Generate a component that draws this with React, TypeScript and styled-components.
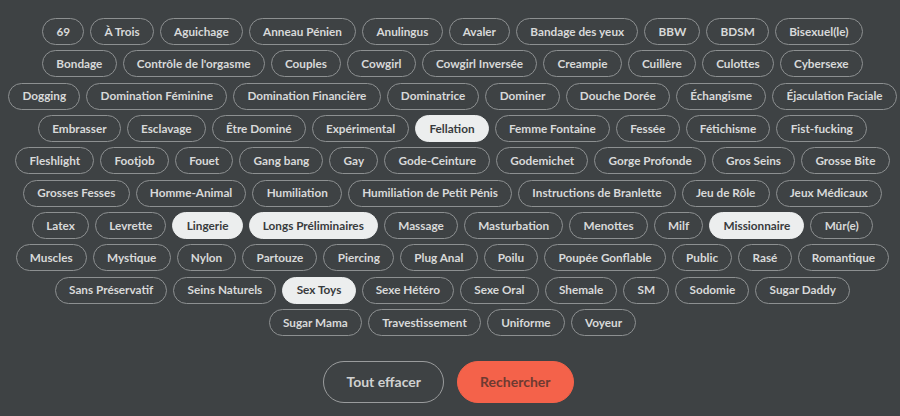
import React from "react";
import styled, { createGlobalStyle } from "styled-components";

const GlobalStyle = createGlobalStyle`
  html, body { margin: 0; padding: 0; background: #3e4244; }
  body { font-family: "Lato", "Liberation Sans", sans-serif; }
`;

const Page = styled.div`
  width: 900px;
  height: 416px;
  box-sizing: border-box;
  padding: 18px 5px 0 10px;
  display: flex;
  flex-direction: column;
  align-items: center;
  overflow: hidden;
`;

const TagCloud = styled.div`
  display: flex;
  flex-direction: column;
  gap: 5.33px;
  width: 100%;
`;

const TagRow = styled.div`
  display: flex;
  justify-content: center;
  gap: 6px;
`;

const Tag = styled.button<{ $active?: boolean }>`
  height: 27px;
  box-sizing: border-box;
  padding: 0 13.2px;
  border-radius: 14px;
  border: 1px solid ${(p) => (p.$active ? "#eceeee" : "#8d9091")};
  background: ${(p) => (p.$active ? "#eceeee" : "transparent")};
  color: ${(p) => (p.$active ? "#383b3d" : "#d8d9d9")};
  font-family: "Lato", "Liberation Sans", sans-serif;
  font-weight: 700;
  font-size: 11.75px;
  line-height: 1;
  white-space: nowrap;
  display: inline-flex;
  align-items: center;
  flex: none;
  cursor: pointer;
`;

const Actions = styled.div`
  display: flex;
  gap: 13px;
  margin-top: 25px;
  margin-right: 8px;
`;

const ActionButton = styled.button<{ $primary?: boolean }>`
  height: 42px;
  box-sizing: border-box;
  padding: 0 22px;
  border-radius: 21px;
  border: 1px solid ${(p) => (p.$primary ? "#f4624a" : "#9a9c9d")};
  background: ${(p) => (p.$primary ? "#f4624a" : "transparent")};
  color: ${(p) => (p.$primary ? "#6e3a31" : "#d0d1d1")};
  font-family: "Lato", "Liberation Sans", sans-serif;
  font-weight: 700;
  font-size: 14px;
  cursor: pointer;
`;

const rows: string[][] = [
  ["69", "À Trois", "Aguichage", "Anneau Pénien", "Anulingus", "Avaler", "Bandage des yeux", "BBW", "BDSM", "Bisexuel(le)"],
  ["Bondage", "Contrôle de l'orgasme", "Couples", "Cowgirl", "Cowgirl Inversée", "Creampie", "Cuillère", "Culottes", "Cybersexe"],
  ["Dogging", "Domination Féminine", "Domination Financière", "Dominatrice", "Dominer", "Douche Dorée", "Échangisme", "Éjaculation Faciale"],
  ["Embrasser", "Esclavage", "Être Dominé", "Expérimental", "Fellation", "Femme Fontaine", "Fessée", "Fétichisme", "Fist-fucking"],
  ["Fleshlight", "Footjob", "Fouet", "Gang bang", "Gay", "Gode-Ceinture", "Godemichet", "Gorge Profonde", "Gros Seins", "Grosse Bite"],
  ["Grosses Fesses", "Homme-Animal", "Humiliation", "Humiliation de Petit Pénis", "Instructions de Branlette", "Jeu de Rôle", "Jeux Médicaux"],
  ["Latex", "Levrette", "Lingerie", "Longs Préliminaires", "Massage", "Masturbation", "Menottes", "Milf", "Missionnaire", "Mûr(e)"],
  ["Muscles", "Mystique", "Nylon", "Partouze", "Piercing", "Plug Anal", "Poilu", "Poupée Gonflable", "Public", "Rasé", "Romantique"],
  ["Sans Préservatif", "Seins Naturels", "Sex Toys", "Sexe Hétéro", "Sexe Oral", "Shemale", "SM", "Sodomie", "Sugar Daddy"],
  ["Sugar Mama", "Travestissement", "Uniforme", "Voyeur"],
];

const selected = new Set(["Fellation", "Lingerie", "Longs Préliminaires", "Missionnaire", "Sex Toys"]);

export default function App() {
  return (
    <>
      <GlobalStyle />
      <Page>
        <TagCloud>
          {rows.map((row, i) => (
            <TagRow key={i}>
              {row.map((t) => (
                <Tag key={t} $active={selected.has(t)}>
                  {t}
                </Tag>
              ))}
            </TagRow>
          ))}
        </TagCloud>
        <Actions>
          <ActionButton>Tout effacer</ActionButton>
          <ActionButton $primary>Rechercher</ActionButton>
        </Actions>
      </Page>
    </>
  );
}
